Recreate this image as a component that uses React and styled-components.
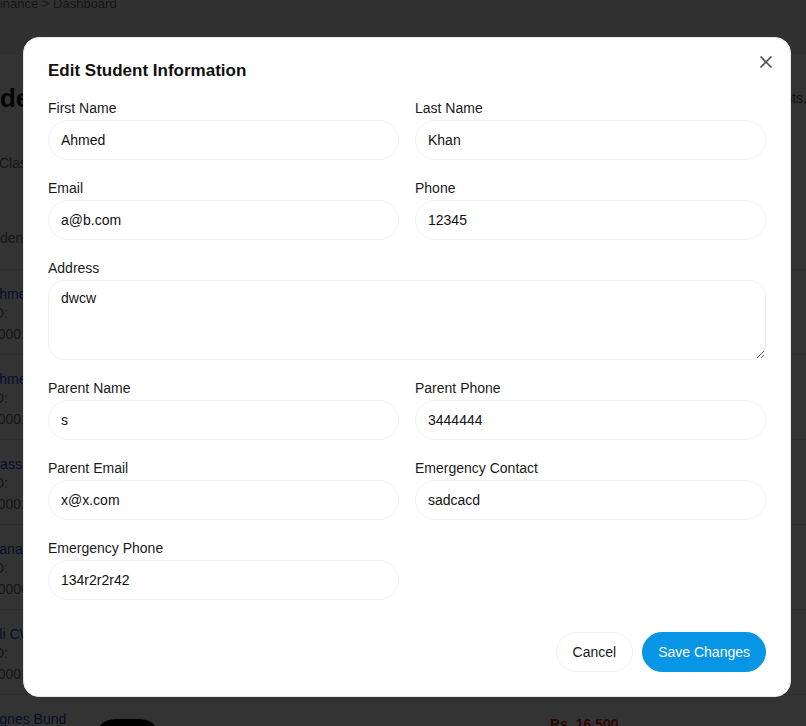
import styled, { createGlobalStyle } from 'styled-components';

const GlobalStyle = createGlobalStyle`
  * { box-sizing: border-box; }
  body {
    margin: 0;
    font-family: "Liberation Sans", Arial, sans-serif;
    background: #fff;
    overflow: hidden;
  }
`;

// ---- page behind the dialog ----

const Page = styled.div`
  height: 100vh;
  background: #fff;
  overflow: hidden;
`;

const TopBar = styled.div`
  display: flow-root;
  height: 54px;
  background: #f3f4f6;
  border-bottom: 1px solid #e5e7eb;
`;

const Crumbs = styled.div`
  margin: -6px 0 0 -8px;
  font-size: 13px;
  line-height: 20px;
  color: #6b7280;
`;

const HeadingRow = styled.div`
  display: flex;
  justify-content: space-between;
  align-items: center;
  margin: 28px -1px 0 -42px;
`;

const Heading = styled.h1`
  margin: 0;
  font-size: 26px;
  line-height: 32px;
  font-weight: 700;
  color: #111;
`;

const Subtitle = styled.p`
  margin: 0;
  font-size: 14px;
  color: #4b5563;
`;

const FilterLabel = styled.div`
  margin: 39px 0 0 -1px;
  font-size: 14px;
  line-height: 20px;
  color: #6b7280;
`;

const TableHead = styled.div`
  margin: 55px 0 0 -21px;
  padding: 0 0 21px;
  font-size: 14px;
  line-height: 20px;
  color: #6b7280;
  border-bottom: 1px solid #e5e7eb;
`;

const Row = styled.div`
  display: grid;
  grid-template-columns: 105px 455px 1fr;
  align-items: center;
  height: 85px;
  margin-left: -10px;
  padding: 14px 0 10px;
  border-bottom: 1px solid #e5e7eb;
`;

const NameCell = styled.div`
  display: flex;
  flex-direction: column;
  align-self: start;
  font-size: 14px;
  white-space: nowrap;
`;

const Name = styled.span`
  line-height: 20px;
  color: #1d4ed8;
`;

const Meta = styled.span`
  line-height: 18px;
  color: #6b7280;
  ${({ $gap }) => $gap && 'margin-top: 2px; line-height: 20px;'}
`;

const Pill = styled.span`
  width: 65px;
  height: 40px;
  border-radius: 20px;
  background: #000;
`;

const Amount = styled.span`
  align-self: start;
  margin-top: 5px;
  font-size: 14px;
  line-height: 20px;
  font-weight: 700;
  color: #dc2626;
`;

// ---- dialog ----

const Overlay = styled.div`
  position: fixed;
  inset: 0;
  display: flex;
  align-items: center;
  justify-content: center;
  padding: 8px 0 0 8px;
  background: rgba(0, 0, 0, 0.8);
`;

const Dialog = styled.div`
  position: relative;
  width: 768px;
  padding: 24px;
  background: #fff;
  border: 1px solid #e2e8f0;
  border-radius: 16px;
`;

const Title = styled.h2`
  margin: 0 0 18px;
  font-size: 17px;
  line-height: 18px;
  font-weight: 700;
  color: #111;
`;

const Close = styled.button`
  position: absolute;
  top: 12px;
  right: 12px;
  width: 24px;
  height: 24px;
  display: flex;
  align-items: center;
  justify-content: center;
  padding: 0;
  border: none;
  background: none;
  color: #555;
  cursor: pointer;
`;

const Form = styled.div`
  display: grid;
  grid-template-columns: 1fr 1fr;
  column-gap: 16px;
  row-gap: 18px;
`;

const Field = styled.label`
  display: flex;
  flex-direction: column;
  gap: 2px;
  grid-column: ${({ $wide }) => ($wide ? '1 / -1' : 'auto')};
`;

const Label = styled.span`
  font-size: 14px;
  line-height: 20px;
  color: #1a1a1a;
`;

const Input = styled.input`
  height: 40px;
  padding: 0 12px;
  border: 1px solid #efefef;
  border-radius: 20px;
  background: #fff;
  font-family: inherit;
  font-size: 14px;
  color: #111;
  outline: none;
`;

const TextArea = styled.textarea`
  height: 80px;
  padding: 8px 12px;
  border: 1px solid #efefef;
  border-radius: 16px;
  background: #fff;
  font-family: inherit;
  font-size: 14px;
  line-height: 18px;
  color: #111;
  resize: vertical;
  outline: none;
`;

const Footer = styled.div`
  display: flex;
  justify-content: flex-end;
  gap: 9px;
  margin-top: 32px;
`;

const Button = styled.button`
  height: 40px;
  padding: 0 ${({ $primary }) => ($primary ? '15px' : '16px')};
  border-radius: 20px;
  font-family: inherit;
  font-size: 14px;
  cursor: pointer;
  border: 1px solid ${({ $primary }) => ($primary ? '#0796e6' : '#efefef')};
  background: ${({ $primary }) => ($primary ? '#0796e6' : '#fff')};
  color: ${({ $primary }) => ($primary ? '#fff' : '#1a1a1a')};
`;

const students = [
  { name: 'Ahmed Khan', id: '#00021', fee: 'Rs. 12,000' },
  { name: 'Ahmed Raza', id: '#00022', fee: 'Rs. 14,500' },
  { name: 'Hassan Ali', id: '#00023', fee: 'Rs. 9,000' },
  { name: 'Sana Butt', id: '#00004', fee: 'Rs. 11,000' },
  { name: 'Ali CW', id: '#00025', fee: 'Rs. 15,000' },
  { name: 'Agnes Bund', id: '#00026', fee: 'Rs. 16,500' },
];

const fields = [
  { label: 'First Name', value: 'Ahmed' },
  { label: 'Last Name', value: 'Khan' },
  { label: 'Email', value: 'a@b.com' },
  { label: 'Phone', value: '12345' },
  { label: 'Address', value: 'dwcw', area: true },
  { label: 'Parent Name', value: 's' },
  { label: 'Parent Phone', value: '3444444' },
  { label: 'Parent Email', value: 'x@x.com' },
  { label: 'Emergency Contact', value: 'sadcacd' },
  { label: 'Emergency Phone', value: '134r2r2r42' },
];

export default function App() {
  return (
    <>
      <GlobalStyle />
      <Page>
        <TopBar>
          <Crumbs>Finance &gt; Dashboard</Crumbs>
        </TopBar>
        <HeadingRow>
          <Heading>Students</Heading>
          <Subtitle>Manage fees for all students.</Subtitle>
        </HeadingRow>
        <FilterLabel>Class</FilterLabel>
        <TableHead>Student</TableHead>
        {students.map(s => (
          <Row key={s.id}>
            <NameCell>
              <Name>{s.name}</Name>
              <Meta>ID:</Meta>
              <Meta $gap>{s.id}</Meta>
            </NameCell>
            <Pill />
            <Amount>{s.fee}</Amount>
          </Row>
        ))}
      </Page>

      <Overlay>
        <Dialog>
          <Title>Edit Student Information</Title>
          <Close aria-label="Close">
            <svg width="20" height="20" viewBox="0 0 24 24" fill="none" stroke="currentColor" strokeWidth="2" strokeLinecap="round">
              <path d="M18 6 6 18" />
              <path d="m6 6 12 12" />
            </svg>
          </Close>
          <Form>
            {fields.map(f => (
              <Field key={f.label} $wide={f.area}>
                <Label>{f.label}</Label>
                {f.area ? <TextArea defaultValue={f.value} /> : <Input defaultValue={f.value} />}
              </Field>
            ))}
          </Form>
          <Footer>
            <Button>Cancel</Button>
            <Button $primary>Save Changes</Button>
          </Footer>
        </Dialog>
      </Overlay>
    </>
  );
}
